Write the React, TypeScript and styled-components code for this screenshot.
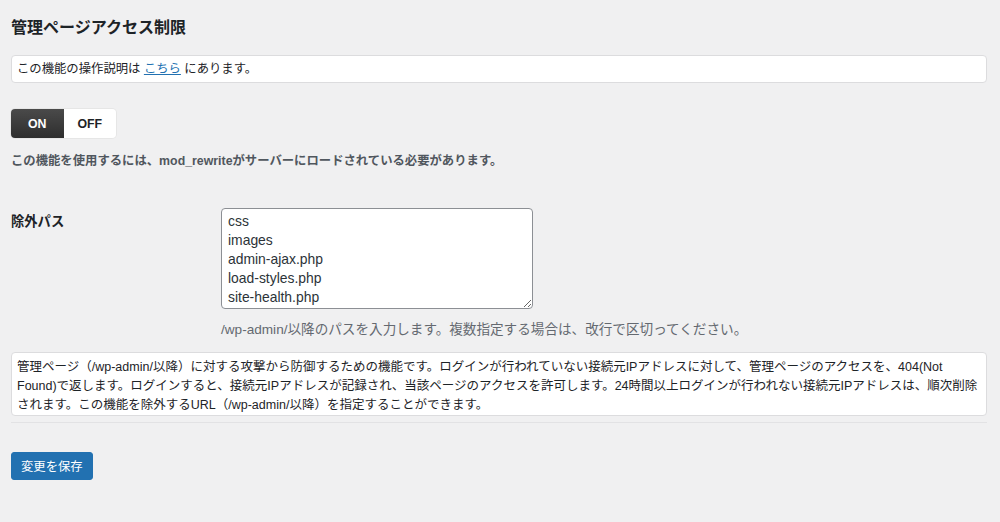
import React from "react";
import styled, { createGlobalStyle } from "styled-components";

const GlobalStyle = createGlobalStyle`
  html, body {
    margin: 0;
    padding: 0;
    background: #f0f0f1;
  }
  body {
    font-family: "Liberation Sans", "Noto Sans CJK JP", sans-serif;
    font-size: 12.35px;
    color: #3c434a;
  }
`;

const Page = styled.div`
  padding: 17px 13px 40px 11px;
  display: flex;
  flex-direction: column;
`;

const Title = styled.h2`
  margin: 0;
  font-size: 16px;
  line-height: 22px;
  font-weight: 700;
  color: #1d2327;
`;

const NoticeBox = styled.div`
  margin-top: 16px;
  background: #fff;
  border: 1px solid #dcdcde;
  border-radius: 4px;
  padding: 4px 5px 3px;
  line-height: 19px;
  color: #1d2327;
`;

const DescriptionBox = styled.div`
  margin-top: 13px;
  background: #fff;
  border: 1px solid #dcdcde;
  border-radius: 4px;
  padding: 5px 7px 0 5px;
  font-size: 12.5px;
  line-height: 19px;
  color: #1d2327;
`;

const Link = styled.a`
  color: #2271b1;
  text-decoration: underline;
`;

const Toggle = styled.div`
  margin-top: 26px;
  display: flex;
  width: 105px;
  height: 29px;
  border-radius: 4px;
  overflow: hidden;
  box-shadow: 0 0 0 1px #e6e6e6;
`;

const ToggleOption = styled.div<{ $active?: boolean }>`
  flex: 1;
  display: flex;
  align-items: center;
  justify-content: center;
  font-weight: 700;
  font-size: 12.35px;
  color: ${(p) => (p.$active ? "#fff" : "#1d2327")};
  background: ${(p) =>
    p.$active ? "linear-gradient(#4a4a4a, #2e2e2e)" : "#fff"};
`;

const Note = styled.p`
  margin: 14px 0 0;
  font-weight: 700;
  color: #50575e;
  line-height: 19px;
`;

const FieldRow = styled.div`
  margin-top: 37px;
  display: grid;
  grid-template-columns: 210px 1fr;
`;

const FieldLabel = styled.div`
  font-weight: 700;
  font-size: 13.3px;
  color: #1d2327;
  line-height: 19px;
  padding-top: 4px;
`;

const FieldBody = styled.div`
  display: flex;
  flex-direction: column;
`;

const TextArea = styled.textarea`
  width: 312px;
  height: 101px;
  box-sizing: border-box;
  border: 1px solid #8c8f94;
  border-radius: 4px;
  padding: 3px 6px 0;
  font-family: "Liberation Sans", "Noto Sans CJK JP", sans-serif;
  font-size: 13.9px;
  line-height: 19px;
  color: #2c3338;
  background: #fff;
  resize: vertical;
  overflow: hidden;
`;

const Hint = styled.p`
  margin: 11px 0 0;
  color: #646970;
  font-size: 13.6px;
  line-height: 19px;
`;

const Divider = styled.hr`
  margin: 6px 0 0;
  border: 0;
  border-top: 1px solid #e2e2e4;
`;

const SaveButton = styled.button`
  margin-top: 29px;
  align-self: flex-start;
  height: 28px;
  padding: 0 9px;
  background: #2271b1;
  border: 1px solid #2271b1;
  border-radius: 3px;
  color: #fff;
  font-family: "Liberation Sans", "Noto Sans CJK JP", sans-serif;
  font-size: 12.35px;
`;

export default function App() {
  return (
    <>
      <GlobalStyle />
      <Page>
        <Title>管理ページアクセス制限</Title>
        <NoticeBox>
          この機能の操作説明は <Link href="#">こちら</Link> にあります。
        </NoticeBox>
        <Toggle>
          <ToggleOption $active>ON</ToggleOption>
          <ToggleOption>OFF</ToggleOption>
        </Toggle>
        <Note>
          この機能を使用するには、mod_rewriteがサーバーにロードされている必要があります。
        </Note>
        <FieldRow>
          <FieldLabel>除外パス</FieldLabel>
          <FieldBody>
            <TextArea
              defaultValue={
                "css\nimages\nadmin-ajax.php\nload-styles.php\nsite-health.php"
              }
            />
            <Hint>
              /wp-admin/以降のパスを入力します。複数指定する場合は、改行で区切ってください。
            </Hint>
          </FieldBody>
        </FieldRow>
        <DescriptionBox>
          管理ページ（/wp-admin/以降）に対する攻撃から防御するための機能です。ログインが行われていない接続元IPアドレスに対して、管理ページのアクセスを、404(Not
          Found)で返します。ログインすると、接続元IPアドレスが記録され、当該ページのアクセスを許可します。24時間以上ログインが行われない接続元IPアドレスは、順次削除されます。この機能を除外するURL（/wp-admin/以降）を指定することができます。
        </DescriptionBox>
        <Divider />
        <SaveButton>変更を保存</SaveButton>
      </Page>
    </>
  );
}
